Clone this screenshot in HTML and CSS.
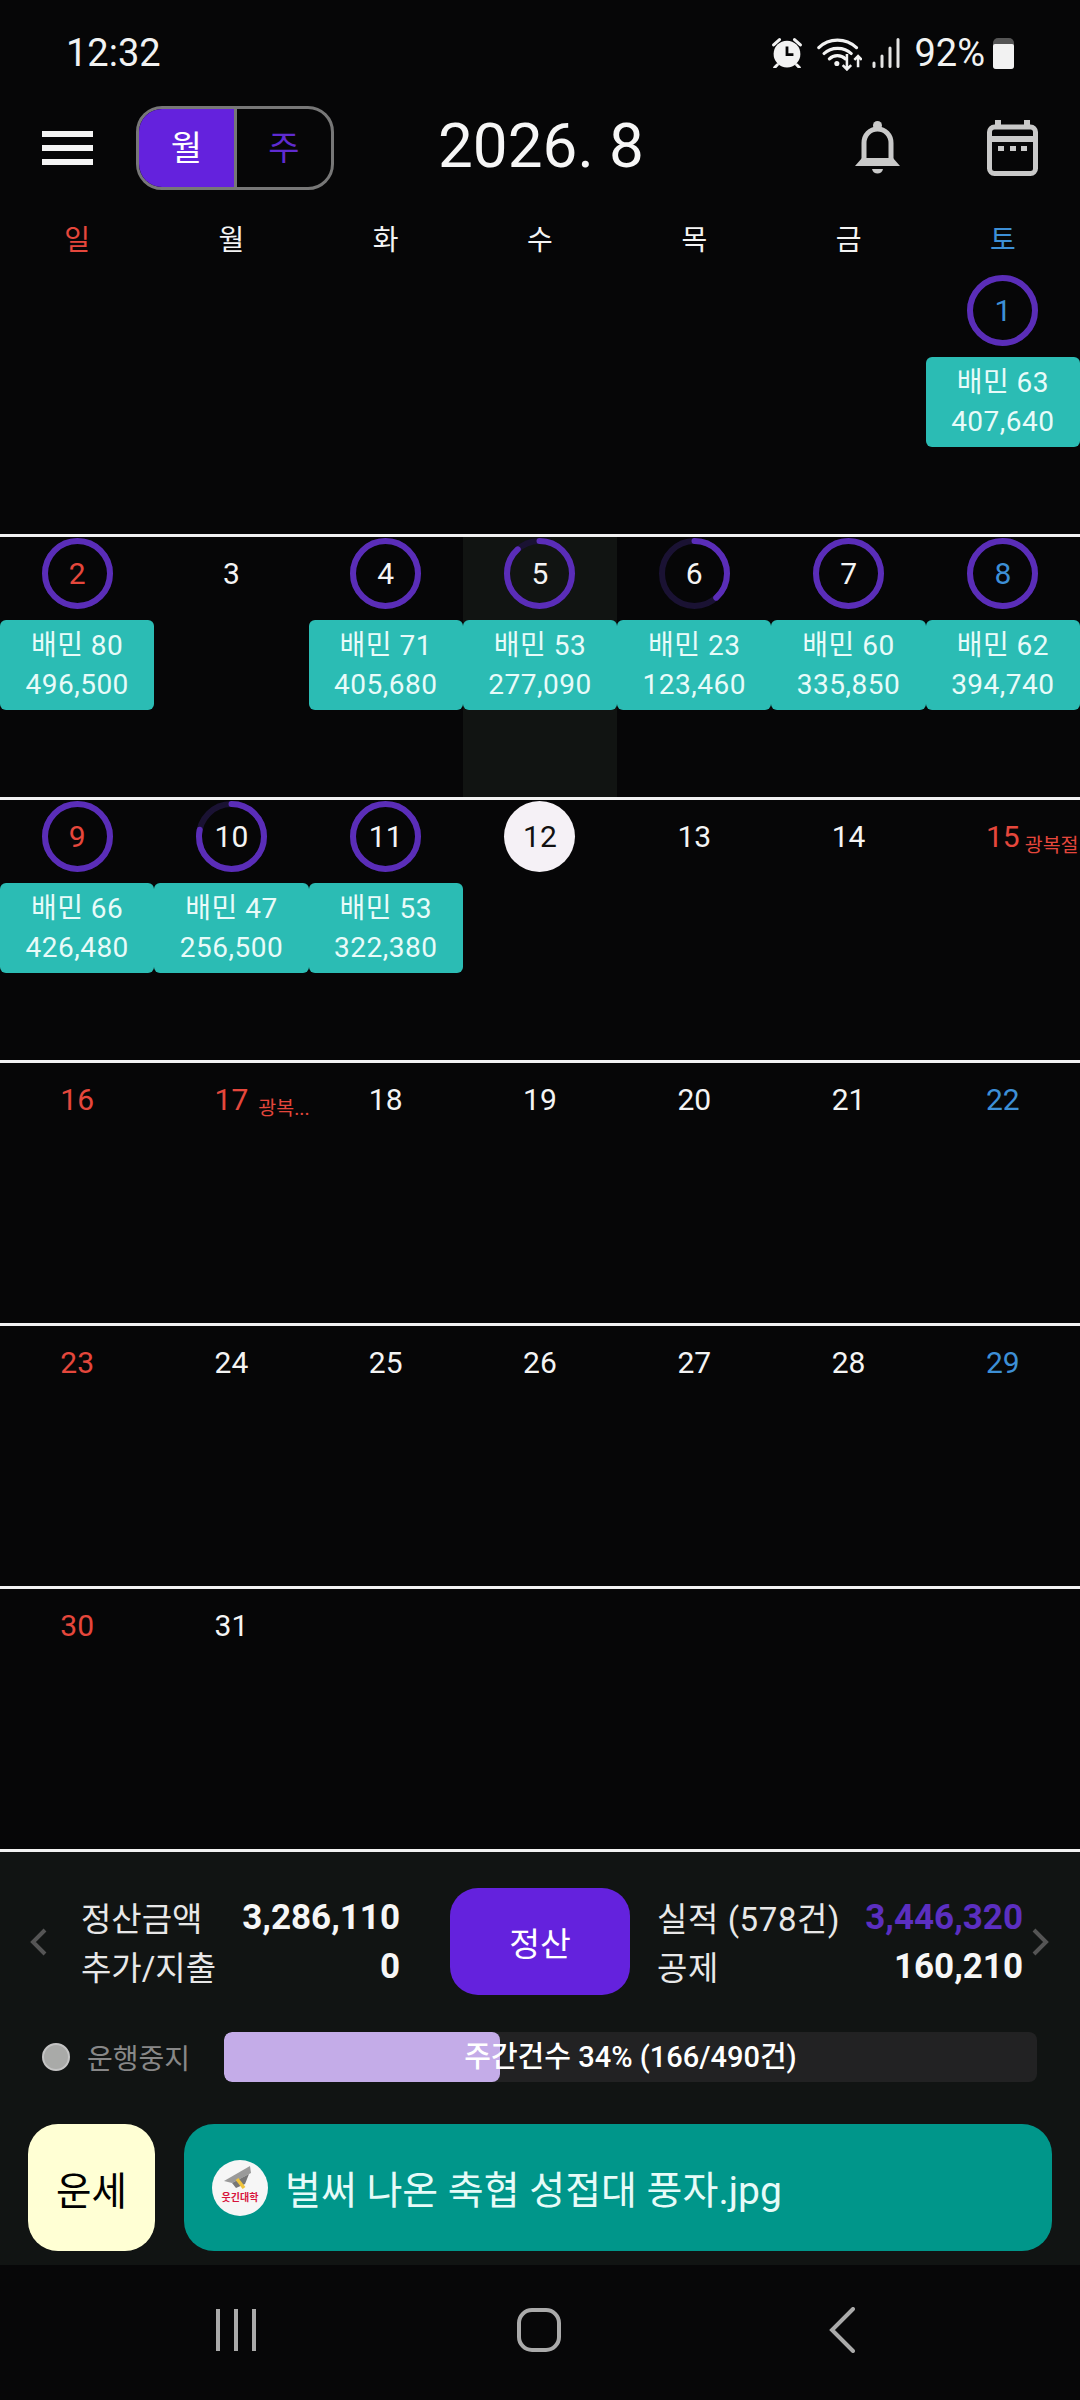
FILE: index.html
```html
<!DOCTYPE html>
<html lang="ko">
<head>
    <meta charset="UTF-8">
    <meta name="viewport" content="width=device-width, initial-scale=1.0">
    <title>Calendar</title>
    <link rel="stylesheet" href="styles.css">
</head>
<body>
    <div class="status-bar">
        <span class="clock">12:32</span>
        <div class="status-icons">
            <svg class="ic-alarm" width="30" height="30" viewBox="0 0 28 28">
                <circle cx="14" cy="15" r="12.500" fill="#f2f2f2"/>
                <path d="M14 8V15.500H20" fill="none" stroke="#050506" stroke-width="2.600"/>
                <path d="M1.500 6.500 7 1.500M26.500 6.500 21 1.500M5 25 2.500 27.500M23 25 25.500 27.500" fill="none" stroke="#f2f2f2" stroke-width="2.800" stroke-linecap="round"/>
            </svg>
            <svg class="ic-wifi" width="45" height="35" viewBox="0 0 42 33">
                <path d="M1.500 11C11 1.500 27 1.500 37 11M6.500 16.500C13 10 25.500 10 32 16.500M11.500 21.500C15.500 17.500 22.500 17.500 26.500 21.500" fill="none" stroke="#f2f2f2" stroke-width="3" stroke-linecap="round"/>
                <circle cx="18.500" cy="26" r="2.400" fill="#f2f2f2"/>
                <path d="M28 17V31.500M24 27.500 28 31.500 32 27.500M38.500 29.500V19M35 22.500 38.500 19 42 22.500" fill="none" stroke="#f2f2f2" stroke-width="2.400"/>
            </svg>
            <svg class="ic-signal" width="28" height="30" viewBox="0 0 28 30">
                <path d="M2 28.500V25M10 28.500V18M18 28.500V10M26 28.500V1.500" fill="none" stroke="#e4e4e4" stroke-width="3" stroke-linecap="round"/>
            </svg>
            <span class="battery-pct">92%</span>
            <div class="battery"><div class="battery-fill"></div></div>
        </div>
    </div>

    <header class="topbar">
        <div class="menu-btn"><span></span><span></span><span></span></div>
        <div class="view-toggle">
            <div class="toggle-item active">월</div>
            <div class="toggle-item">주</div>
        </div>
        <div class="month-title">2026. 8</div>
        <svg class="ic-bell" width="45" height="54" viewBox="0 0 45 54">
            <circle cx="22.500" cy="4.500" r="4.500" fill="#c9c9c9"/>
            <path d="M9 40V22C9 14 15 8 22.500 8S36 14 36 22V40" fill="none" stroke="#c9c9c9" stroke-width="5"/>
            <path d="M0 45 7 37H38L45 45Z" fill="#c9c9c9"/>
            <path d="M17 48H28C27 54 18 54 17 48Z" fill="#c9c9c9"/>
        </svg>
        <svg class="ic-calendar" width="51" height="56" viewBox="0 0 51 56">
            <rect x="2.500" y="7" width="46" height="46.500" rx="5" fill="none" stroke="#c9c9c9" stroke-width="5"/>
            <path d="M0 19H51" stroke="#c9c9c9" stroke-width="6"/>
            <path d="M11 0V8M40 0V8" stroke="#c9c9c9" stroke-width="6"/>
            <path d="M11 26h6v5h-6zM23 26h6v5h-6zM34 26h6v5h-6z" fill="#c9c9c9"/>
        </svg>
    </header>

    <div class="weekdays">
        <div class="sun">일</div>
        <div>월</div>
        <div>화</div>
        <div>수</div>
        <div>목</div>
        <div>금</div>
        <div class="sat">토</div>
    </div>

    <main class="calendar">
        <section class="week">
            <div class="cell"></div>
            <div class="cell"></div>
            <div class="cell"></div>
            <div class="cell"></div>
            <div class="cell"></div>
            <div class="cell"></div>
            <div class="cell">
                <div class="day sat">
                    <svg class="ring" viewBox="0 0 71 71"><circle class="ring-track" cx="35.500" cy="35.500" r="32.500"/><circle class="ring-value" cx="35.500" cy="35.500" r="32.500" pathLength="60" stroke-dasharray="60 60"/></svg>
                    1
                </div>
                <div class="trip">배민 63<br>407,640</div>
            </div>
        </section>

        <section class="week">
            <div class="cell">
                <div class="day sun">
                    <svg class="ring" viewBox="0 0 71 71"><circle class="ring-track" cx="35.500" cy="35.500" r="32.500"/><circle class="ring-value" cx="35.500" cy="35.500" r="32.500" pathLength="60" stroke-dasharray="60 60"/></svg>
                    2
                </div>
                <div class="trip">배민 80<br>496,500</div>
            </div>
            <div class="cell"><div class="day">3</div></div>
            <div class="cell">
                <div class="day">
                    <svg class="ring" viewBox="0 0 71 71"><circle class="ring-track" cx="35.500" cy="35.500" r="32.500"/><circle class="ring-value" cx="35.500" cy="35.500" r="32.500" pathLength="60" stroke-dasharray="60 60"/></svg>
                    4
                </div>
                <div class="trip">배민 71<br>405,680</div>
            </div>
            <div class="cell selected">
                <div class="day">
                    <svg class="ring" viewBox="0 0 71 71"><circle class="ring-track" cx="35.500" cy="35.500" r="32.500"/><circle class="ring-value" cx="35.500" cy="35.500" r="32.500" pathLength="60" stroke-dasharray="53 60"/></svg>
                    5
                </div>
                <div class="trip">배민 53<br>277,090</div>
            </div>
            <div class="cell">
                <div class="day">
                    <svg class="ring" viewBox="0 0 71 71"><circle class="ring-track" cx="35.500" cy="35.500" r="32.500"/><circle class="ring-value" cx="35.500" cy="35.500" r="32.500" pathLength="60" stroke-dasharray="23 60"/></svg>
                    6
                </div>
                <div class="trip">배민 23<br>123,460</div>
            </div>
            <div class="cell">
                <div class="day">
                    <svg class="ring" viewBox="0 0 71 71"><circle class="ring-track" cx="35.500" cy="35.500" r="32.500"/><circle class="ring-value" cx="35.500" cy="35.500" r="32.500" pathLength="60" stroke-dasharray="60 60"/></svg>
                    7
                </div>
                <div class="trip">배민 60<br>335,850</div>
            </div>
            <div class="cell">
                <div class="day sat">
                    <svg class="ring" viewBox="0 0 71 71"><circle class="ring-track" cx="35.500" cy="35.500" r="32.500"/><circle class="ring-value" cx="35.500" cy="35.500" r="32.500" pathLength="60" stroke-dasharray="60 60"/></svg>
                    8
                </div>
                <div class="trip">배민 62<br>394,740</div>
            </div>
        </section>

        <section class="week">
            <div class="cell">
                <div class="day sun">
                    <svg class="ring" viewBox="0 0 71 71"><circle class="ring-track" cx="35.500" cy="35.500" r="32.500"/><circle class="ring-value" cx="35.500" cy="35.500" r="32.500" pathLength="60" stroke-dasharray="60 60"/></svg>
                    9
                </div>
                <div class="trip">배민 66<br>426,480</div>
            </div>
            <div class="cell">
                <div class="day">
                    <svg class="ring" viewBox="0 0 71 71"><circle class="ring-track" cx="35.500" cy="35.500" r="32.500"/><circle class="ring-value" cx="35.500" cy="35.500" r="32.500" pathLength="60" stroke-dasharray="47 60"/></svg>
                    10
                </div>
                <div class="trip">배민 47<br>256,500</div>
            </div>
            <div class="cell">
                <div class="day">
                    <svg class="ring" viewBox="0 0 71 71"><circle class="ring-track" cx="35.500" cy="35.500" r="32.500"/><circle class="ring-value" cx="35.500" cy="35.500" r="32.500" pathLength="60" stroke-dasharray="60 60"/></svg>
                    11
                </div>
                <div class="trip">배민 53<br>322,380</div>
            </div>
            <div class="cell"><div class="day today">12</div></div>
            <div class="cell"><div class="day">13</div></div>
            <div class="cell"><div class="day">14</div></div>
            <div class="cell"><div class="day sun"><span class="num">15<span class="holiday">광복절</span></span></div></div>
        </section>

        <section class="week">
            <div class="cell"><div class="day sun">16</div></div>
            <div class="cell"><div class="day sun"><span class="num">17<span class="holiday holiday-short">광복...</span></span></div></div>
            <div class="cell"><div class="day">18</div></div>
            <div class="cell"><div class="day">19</div></div>
            <div class="cell"><div class="day">20</div></div>
            <div class="cell"><div class="day">21</div></div>
            <div class="cell"><div class="day sat">22</div></div>
        </section>

        <section class="week">
            <div class="cell"><div class="day sun">23</div></div>
            <div class="cell"><div class="day">24</div></div>
            <div class="cell"><div class="day">25</div></div>
            <div class="cell"><div class="day">26</div></div>
            <div class="cell"><div class="day">27</div></div>
            <div class="cell"><div class="day">28</div></div>
            <div class="cell"><div class="day sat">29</div></div>
        </section>

        <section class="week">
            <div class="cell"><div class="day sun">30</div></div>
            <div class="cell"><div class="day">31</div></div>
            <div class="cell"></div>
            <div class="cell"></div>
            <div class="cell"></div>
            <div class="cell"></div>
            <div class="cell"></div>
        </section>
    </main>

    <footer class="summary">
        <div class="summary-row">
            <svg class="chevron" width="18" height="28" viewBox="0 0 18 28"><path d="M15 2 3 14 15 26" fill="none" stroke="#555" stroke-width="4"/></svg>
            <div class="totals totals-left">
                <div class="line"><span>정산금액</span><strong>3,286,110</strong></div>
                <div class="line"><span>추가/지출</span><strong>0</strong></div>
            </div>
            <button class="settle-btn">정산</button>
            <div class="totals totals-right">
                <div class="line"><span>실적 (578건)</span><strong class="purple">3,446,320</strong></div>
                <div class="line"><span>공제</span><strong>160,210</strong></div>
            </div>
            <svg class="chevron" width="18" height="28" viewBox="0 0 18 28"><path d="M3 2 15 14 3 26" fill="none" stroke="#555" stroke-width="4"/></svg>
        </div>

        <div class="progress-row">
            <span class="state-dot"></span>
            <span class="state-label">운행중지</span>
            <div class="progress">
                <div class="progress-fill" style="width: 34%"></div>
                <div class="progress-text">주간건수 34% (166/490건)</div>
            </div>
        </div>

        <div class="action-row">
            <button class="fortune-btn">운세</button>
            <div class="banner">
                <div class="banner-logo">
                    <svg width="56" height="32" viewBox="0 0 56 32">
                        <path d="M12 21 38 6 39 13 20 23Z" fill="#9a9a9a"/>
                        <path d="M20 23 24 28 33 24 37 14Z" fill="#777"/>
                        <path d="M25 19 32 28" stroke="#f0c43c" stroke-width="3.500"/>
                    </svg>
                    <span>웃긴대학</span>
                </div>
                <span class="banner-text">벌써 나온 축협 성접대 풍자.jpg</span>
            </div>
        </div>
    </footer>

    <nav class="nav-bar">
        <div class="nav-item"><span class="nav-recent"><i></i><i></i><i></i></span></div>
        <div class="nav-item"><span class="nav-home"></span></div>
        <div class="nav-item">
            <svg width="26" height="46" viewBox="0 0 26 46"><path d="M24 2 3 23 24 44" fill="none" stroke="#aaa" stroke-width="4" stroke-linecap="round"/></svg>
        </div>
    </nav>
</body>
</html>
```

FILE: styles.css
```css
* {
    padding: 0;
    margin: 0;
    box-sizing: border-box;
}

body {
    width: 1080px;
    height: 2400px;
    overflow: hidden;
    background-color: #060607;
    color: #f4f4f4;
    font-family: Roboto, "Noto Sans CJK KR", sans-serif;
    display: flex;
    flex-direction: column;
}

button {
    border: none;
    font-family: inherit;
}

/* status bar */
.status-bar {
    height: 90px;
    padding: 30px 66px 0;
    display: flex;
    justify-content: space-between;
    align-items: flex-start;
    font-size: 38px;
    line-height: 46px;
    color: #f2f2f2;
}

.status-icons {
    display: flex;
    align-items: center;
    height: 46px;
}

.ic-wifi { margin-left: 15px; }
.ic-signal { margin-left: 10px; }
.battery-pct { margin-left: 14px; }

.battery {
    width: 21px;
    height: 31px;
    margin-left: 8px;
    background-color: #555;
    border-radius: 5px 5px 3px 3px;
    display: flex;
    align-items: flex-end;
}

.battery-fill {
    width: 100%;
    height: 25px;
    background-color: #f2f2f2;
    border-radius: 2px 2px 3px 3px;
}

/* header */
.topbar {
    height: 116px;
    padding: 0 42px;
    display: flex;
    align-items: center;
}

.menu-btn {
    width: 51px;
    display: flex;
    flex-direction: column;
    gap: 8px;
}

.menu-btn span {
    height: 6px;
    background-color: #f4f4f4;
}

.view-toggle {
    width: 198px;
    height: 84px;
    margin-left: 43px;
    border: 3px solid #777;
    border-radius: 26px;
    overflow: hidden;
    display: flex;
}

.toggle-item {
    flex: 1;
    padding-bottom: 5px;
    display: flex;
    align-items: center;
    justify-content: center;
    font-size: 34px;
    color: #5f2bd0;
}

.toggle-item.active {
    flex: 0 0 98px;
    background-color: #6422dd;
    border-right: 3px solid #777;
    color: #fff;
}

.month-title {
    margin-left: 104px;
    padding-bottom: 5px;
    font-size: 62px;
    color: #f6f6f6;
}

.ic-bell { margin-left: auto; }
.ic-calendar { margin-left: 87px; }

.weekdays {
    height: 68px;
    padding-bottom: 4px;
    display: grid;
    grid-template-columns: repeat(7, 1fr);
    align-items: center;
    text-align: center;
    font-size: 28px;
}

/* calendar */
.week {
    height: 263px;
    border-bottom: 3px solid #f2f2f2;
    display: grid;
    grid-template-columns: repeat(7, 1fr);
}

.cell.selected {
    background-color: #111412;
}

.day {
    position: relative;
    width: 71px;
    height: 71px;
    margin: 1px auto 11px;
    display: flex;
    align-items: center;
    justify-content: center;
    font-size: 30px;
    color: #f4f4f4;
}

.sun { color: #e5473c; }
.sat { color: #3d8fd6; }

.day.today {
    background-color: #f5f1f6;
    border-radius: 50%;
    color: #111;
}

.ring {
    position: absolute;
    top: 0;
    left: 0;
    width: 71px;
    height: 71px;
    transform: rotate(-90deg);
}

.ring circle {
    fill: none;
    stroke-width: 6;
}

.ring-track { stroke: #1a1233; }

.ring-value {
    stroke: #5a2db8;
    stroke-linecap: round;
}

.num { position: relative; }

.holiday {
    position: absolute;
    left: 100%;
    top: 16px;
    margin-left: 5px;
    font-size: 19.500px;
    line-height: 22px;
    white-space: nowrap;
}

.holiday-short { margin-left: 10px; }

.trip {
    height: 90px;
    background-color: #2bbcb4;
    border-radius: 6px;
    text-align: center;
    font-size: 28px;
    line-height: 39px;
    padding-top: 6px;
    color: #e8fbf9;
    letter-spacing: 0.5px;
}

/* bottom summary */
.summary {
    height: 413px;
    padding-top: 36px;
    background-color: #111413;
}

.summary-row {
    height: 107px;
    padding: 0 30px;
    display: flex;
    align-items: center;
}

.totals {
    font-size: 33px;
}

.totals-left {
    width: 319px;
    margin-left: 33px;
}

.totals-right {
    width: 366px;
    margin-left: 27px;
    margin-right: 8px;
}

.totals-right span {
    letter-spacing: 0.6px;
}

.line {
    height: 49px;
    display: flex;
    align-items: center;
    justify-content: space-between;
    color: #e8e8e8;
}

.line strong {
    font-size: 35px;
    font-weight: 700;
    color: #f6f6f6;
}

.line strong.purple { color: #5b2fc0; }

.settle-btn {
    width: 180px;
    height: 107px;
    margin-left: 50px;
    background-color: #6422dd;
    border-radius: 28px;
    font-size: 33.500px;
    color: #fff;
}

.progress-row {
    height: 50px;
    margin-top: 37px;
    padding: 0 43px 0 42px;
    display: flex;
    align-items: center;
}

.state-dot {
    width: 28px;
    height: 28px;
    background-color: #a9aaa8;
    border: 2px solid #c4c4c4;
    border-radius: 50%;
}

.state-label {
    width: 154px;
    padding-left: 17px;
    font-size: 28px;
    color: #888;
}

.progress {
    position: relative;
    flex: 1;
    height: 50px;
    background-color: #222223;
    border-radius: 8px;
    overflow: hidden;
}

.progress-fill {
    height: 100%;
    background-color: #c4ace8;
    border-radius: 8px;
}

.progress-text {
    position: absolute;
    top: 0;
    left: 0;
    right: 0;
    text-align: center;
    font-size: 29px;
    line-height: 50px;
    font-weight: 500;
    color: #fff;
}

.action-row {
    height: 127px;
    margin-top: 42px;
    padding: 0 28px;
    display: flex;
    gap: 29px;
}

.fortune-btn {
    width: 127px;
    background-color: #ffffd4;
    border-radius: 30px;
    font-size: 38.500px;
    color: #000;
}

.banner {
    flex: 1;
    padding-left: 28px;
    background-color: #00968a;
    border-radius: 30px;
    display: flex;
    align-items: center;
}

.banner-logo {
    width: 56px;
    height: 56px;
    background-color: #f6f6f6;
    border-radius: 50%;
    display: flex;
    flex-direction: column;
    align-items: center;
}

.banner-logo svg {
    flex-shrink: 0;
}

.banner-logo span {
    font-size: 10px;
    line-height: 12px;
    font-weight: 700;
    color: #d8143c;
    white-space: nowrap;
}

.banner-text {
    margin-left: 17px;
    padding-bottom: 2px;
    font-size: 39px;
    color: #e6fbf8;
}

/* android nav */
.nav-bar {
    flex: 1;
    padding: 0 86px 5px 84px;
    background-color: #070708;
    display: grid;
    grid-template-columns: repeat(3, 1fr);
    align-items: center;
    justify-items: center;
}

.nav-item {
    display: flex;
}

.nav-recent {
    display: flex;
    gap: 14px;
}

.nav-recent i {
    width: 4px;
    height: 42px;
    background-color: #aaa;
}

.nav-home {
    width: 44px;
    height: 44px;
    border: 4px solid #aaa;
    border-radius: 15px;
}
```
